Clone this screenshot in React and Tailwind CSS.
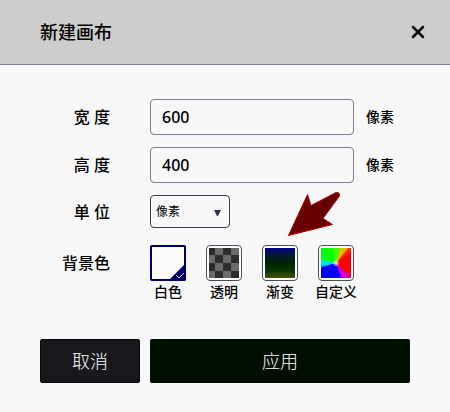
import React, { useState } from "react";
import { X } from "lucide-react";

const swatches = [
  { id: "white", label: "白色", fill: "bg-[#fbfbfd]" },
  {
    id: "transparent",
    label: "透明",
    fill: "bg-[repeating-conic-gradient(#6b6c6e_0%_25%,#2d2d2f_0%_50%)] bg-[length:16px_16px] bg-[position:-2px_-1px]",
  },
  {
    id: "gradient",
    label: "渐变",
    fill: "bg-[linear-gradient(to_bottom,#00008c_0%,#001c2c_26%,#002200_50%,#0a3600_75%,#405400_100%)]",
  },
  {
    id: "custom",
    label: "自定义",
    fill: "bg-[radial-gradient(circle,#ffffff_0%,#ffffff00_18%),conic-gradient(#40ff00_0deg,#60f000_14deg,#dcc800_22deg,#e0b800_36deg,#ff3000_42deg,#ff0000_60deg,#ff0000_128deg,#e000c0_138deg,#d000e0_154deg,#2000ff_164deg,#0000ff_180deg,#0000ff_250deg,#00d8ff_260deg,#00e0f0_276deg,#00ff30_286deg,#00ff00_300deg,#10ff00_340deg,#40ff00_360deg)]",
  },
];

const SizeField = ({ id, label, value, onChange }) => (
  <div className="flex items-center">
    <label htmlFor={id} className="w-[70px] shrink-0 text-right font-medium">
      {label}
    </label>
    <input
      id={id}
      type="text"
      value={value}
      onChange={(e) => onChange(e.target.value)}
      className="ml-10 h-9 min-w-0 flex-1 rounded border border-[#7d7d92] bg-transparent px-[11px] font-medium outline-none"
    />
    <span className="ml-3 w-11 shrink-0 text-sm font-medium">像素</span>
  </div>
);

const Swatch = ({ item, checked, onSelect }) => (
  <label className="flex w-9 cursor-pointer flex-col items-center">
    <span className="relative block size-9">
      <input
        type="radio"
        name="background"
        value={item.id}
        checked={checked}
        onChange={onSelect}
        className="peer sr-only"
      />
      <span className="block size-9 rounded border border-[#4a4a5e] bg-white p-0.5 peer-checked:rounded-xs peer-checked:border-2 peer-checked:border-[#000066] peer-checked:p-0">
        <span className={`block size-full ${item.fill}`} />
      </span>
      <svg viewBox="0 0 18 18" className="absolute right-0 bottom-0 hidden size-[18px] peer-checked:block">
        <path d="M18 0V16a2 2 0 0 1-2 2H0Z" fill="#000066" />
        <path d="M8 12l3 3 5-5" fill="none" stroke="#c8c8f0" strokeWidth="1" />
      </svg>
    </span>
    <span className="mt-px text-sm leading-5 font-medium whitespace-nowrap">{item.label}</span>
  </label>
);

const App = () => {
  const [width, setWidth] = useState("600");
  const [height, setHeight] = useState("400");
  const [unit, setUnit] = useState("px");
  const [background, setBackground] = useState("white");

  return (
    <div className="min-h-screen bg-[#f8f8f8] font-['Noto_Sans','Noto_Sans_CJK_SC',sans-serif] text-base text-black">
      <header className="flex h-[65px] items-center justify-between border-b border-[#7d7d92] bg-[#cdcdcd] pr-[22px] pl-10">
        <h1 className="text-lg font-medium">新建画布</h1>
        <button type="button" aria-label="关闭" className="cursor-pointer text-[#05050f]">
          <X size={20} strokeWidth={3} />
        </button>
      </header>

      <form className="px-10 pt-[34px]" onSubmit={(e) => e.preventDefault()}>
        <div className="flex flex-col gap-3">
          <SizeField id="width" label="宽 度" value={width} onChange={setWidth} />
          <SizeField id="height" label="高 度" value={height} onChange={setHeight} />
          <div className="flex items-center">
            <label htmlFor="unit" className="w-[70px] shrink-0 text-right font-medium">
              单 位
            </label>
            <div className="relative ml-10">
              <select
                id="unit"
                value={unit}
                onChange={(e) => setUnit(e.target.value)}
                className="block h-[33px] w-20 appearance-none rounded border border-[#3c3c50] bg-transparent pl-[5px] text-xs outline-none"
              >
                <option value="px">像素</option>
                <option value="in">英寸</option>
                <option value="mm">毫米</option>
              </select>
              <svg viewBox="0 0 7 6" className="pointer-events-none absolute top-[15px] right-[9px] h-1.5 w-[7px]">
                <path d="M0 0h7L4 6H3Z" fill="#32324a" />
              </svg>
            </div>
          </div>
        </div>

        <fieldset className="relative mt-[17px] flex items-start" aria-labelledby="background-label">
          <span id="background-label" className="flex h-9 w-[70px] shrink-0 items-center justify-end font-medium">
            背景色
          </span>
          <div className="ml-10 flex gap-5">
            {swatches.map((item) => (
              <Swatch
                key={item.id}
                item={item}
                checked={background === item.id}
                onSelect={() => setBackground(item.id)}
              />
            ))}
          </div>
          {/* pointer to the gradient swatch */}
          <svg
            viewBox="0 0 54 46"
            className="pointer-events-none absolute -top-[54px] left-[247px] h-[46px] w-[54px]"
          >
            <path
              d="M1.5 44.5 20.5 3.5 24 14.5 49 1.5Q53 1 52.500 5L36 27.500 45.500 33.500Z"
              fill="#680000"
              stroke="#b80000"
              strokeWidth="1"
            />
          </svg>
        </fieldset>

        <div className="mt-[37px] flex gap-2.5 pb-7 text-lg font-light text-white">
          <button type="button" className="h-11 w-[100px] shrink-0 cursor-pointer rounded-xs border border-[#08080e] bg-[#17171c]">
            取消
          </button>
          <button type="submit" className="h-11 flex-1 cursor-pointer rounded-xs bg-[#000f00]">
            应用
          </button>
        </div>
      </form>
    </div>
  );
};

export default App;
